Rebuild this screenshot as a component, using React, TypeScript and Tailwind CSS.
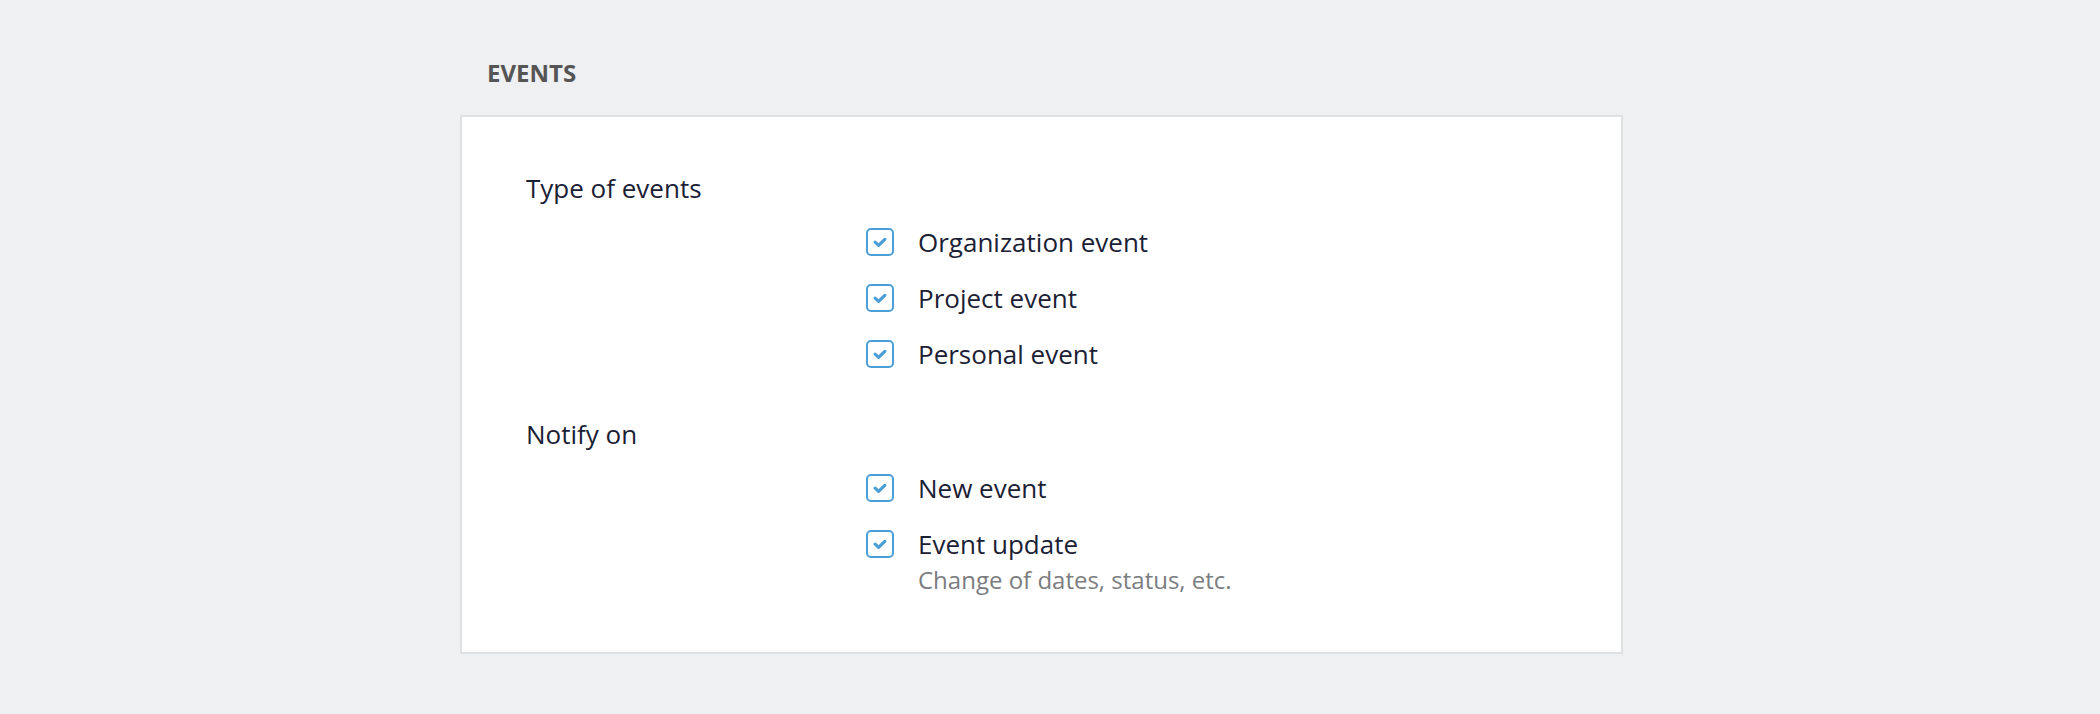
function CheckIcon() {
    return (
        <span className="flex h-[28px] w-[28px] shrink-0 items-center justify-center rounded-[5px] border-[2.5px] border-[#4a9fd9] bg-white">
            <svg width="14" height="11" viewBox="0 0 14 11" fill="none" className="mt-[1px]">
                <path d="M2.2 5.2 L5.6 8.4 L11.8 2.4" stroke="#4a9fd9" strokeWidth="3.2" strokeLinecap="round" strokeLinejoin="round" />
            </svg>
        </span>
    )
}

type Option = { label: string, hint?: string }

function OptionRow({ option }: { option: Option }) {
    return (
        <div className="flex items-start">
            <div className="pt-[4px]">
                <CheckIcon />
            </div>
            <div className="ml-[24px] flex flex-col">
                <span className="text-[26px] leading-[36px] text-[#1b2135]">{option.label}</span>
                {option.hint && (
                    <span className="text-[24px] leading-[36px] text-[#7b7d80]">{option.hint}</span>
                )}
            </div>
        </div>
    )
}

function Section({ title, options, className }: { title: string, options: Option[], className?: string }) {
    return (
        <div className={className}>
            <div className="text-[26px] leading-[36px] text-[#1b2135]">{title}</div>
            <div className="mt-[18px] flex flex-col gap-[20px] pl-[340px]">
                {options.map((o) => <OptionRow key={o.label} option={o} />)}
            </div>
        </div>
    )
}

export default function App() {
    const typeOptions: Option[] = [
        { label: 'Organization event' },
        { label: 'Project event' },
        { label: 'Personal event' },
    ]
    const notifyOptions: Option[] = [
        { label: 'New event' },
        { label: 'Event update', hint: 'Change of dates, status, etc.' },
    ]

    return (
        <div className="min-h-[714px] w-full bg-[#eff0f2] font-['Open_Sans',sans-serif]">
            <div className="ml-[460px] w-[1163px] pt-[57px]">
                {/* header */}
                <h2 className="pl-[27px] text-[24px] font-bold leading-[32px] text-[#555555]">EVENTS</h2>

                {/* card */}
                <div className="mt-[26px] border-2 border-[#dfe0e2] bg-white pb-[54px] pl-[64px] pt-[53px]">
                    <Section title="Type of events" options={typeOptions} />
                    <Section title="Notify on" options={notifyOptions} className="mt-[44px]" />
                </div>
            </div>
        </div>
    )
}
